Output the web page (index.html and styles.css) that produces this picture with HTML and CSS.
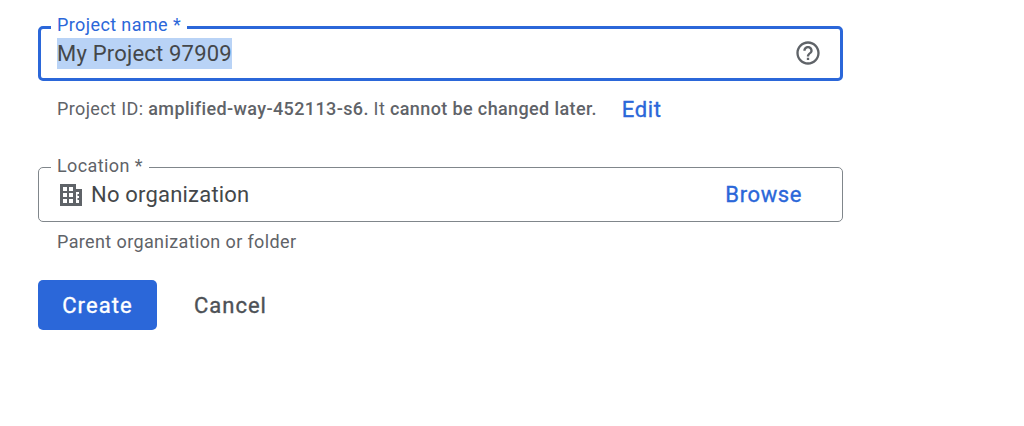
FILE: index.html
```html
<!DOCTYPE html>
<html lang="en">
<head>
    <meta charset="UTF-8">
    <title>New Project</title>
    <link rel="stylesheet" href="styles.css">
</head>
<body>
    <form class="project-form">
        <div class="field field-focused">
            <label class="field-label">Project name *</label>
            <div class="field-value"><span class="selected-text">My Project 97909</span></div>
            <svg class="help-icon" viewBox="0 0 24 24" width="28" height="28" fill="#5f6368">
                <path d="M11 18h2v-2h-2v2zm1-16C6.48 2 2 6.48 2 12s4.48 10 10 10 10-4.48 10-10S17.52 2 12 2zm0 18c-4.41 0-8-3.59-8-8s3.59-8 8-8 8 3.59 8 8-3.59 8-8 8zm0-14c-2.21 0-4 1.79-4 4h2c0-1.1.9-2 2-2s2 .9 2 2c0 2-3 1.75-3 5h2c0-2.25 3-2.5 3-5 0-2.21-1.79-4-4-4z"/>
            </svg>
        </div>
        <div class="hint-row">
            <p class="hint">Project ID: <b>amplified-way-452113-s6.</b> It <b>cannot be changed later.</b></p>
            <a class="link edit-link" href="#">Edit</a>
        </div>

        <div class="field field-location">
            <label class="field-label">Location *</label>
            <svg class="org-icon" viewBox="0 0 22 22" width="22" height="22">
                <path fill="#5f6368" fill-rule="evenodd" d="M0 0h16v5h6v17H0zM3 3v4h4V3zm6 0v4h4V3zM3 9v4h4V9zm6 0v4h4V9zM3 15v4h4v-4zm6 0v4h4v-4zm7-7v11h3v-3h-1.5v-2H19v-2h-1.5v-2H19V8z"/>
            </svg>
            <div class="field-value">No organization</div>
            <a class="link browse-link" href="#">Browse</a>
        </div>
        <p class="hint hint-location">Parent organization or folder</p>

        <div class="actions">
            <button type="button" class="create-button">Create</button>
            <button type="button" class="cancel-button">Cancel</button>
        </div>
    </form>
</body>
</html>
```

FILE: styles.css
```css
body {
    font-family: Roboto, Arial, sans-serif;
    background-color: #fff;
    color: #3c4043;
    margin: 0;
}
.project-form {
    width: 805px;
    margin-left: 38px;
    padding-top: 26px;
}
.field {
    position: relative;
    display: flex;
    align-items: center;
    box-sizing: border-box;
    height: 55px;
    padding: 0 21px 0 19px;
    border: 1px solid #80868b;
    border-radius: 5px;
}
.field-focused {
    border: 3px solid #2b67d9;
    padding: 0 18px 0 16px;
}
.field-location {
    margin-top: 44px;
    padding-left: 21px;
    padding-right: 40px;
}
.field-label {
    position: absolute;
    top: -12px;
    left: 12px;
    padding: 0 6px;
    background-color: #fff;
    color: #5f6368;
    font-size: 18px;
    letter-spacing: 0.4px;
    line-height: 20px;
}
.field-focused .field-label {
    top: -14px;
    left: 10px;
    color: #2b67d9;
}
.field-value {
    flex: 1;
    font-size: 22px;
    letter-spacing: 0.2px;
    line-height: 31px;
    color: #44474a;
}
.selected-text {
    display: inline-block;
    background-color: #b9d3f6;
}
.help-icon {
    flex: none;
    margin-bottom: 2px;
}
.org-icon {
    flex: none;
    margin-right: 9px;
}
.hint-row {
    display: flex;
    align-items: center;
    padding: 14px 0 0 19px;
}
.hint {
    margin: 0;
    font-size: 18px;
    letter-spacing: 0.38px;
    line-height: 28px;
    color: #5f6368;
}
.hint b {
    font-weight: 500;
}
.hint-location {
    padding: 6px 0 0 19px;
}
.link {
    color: #2b67d9;
    font-size: 22px;
    letter-spacing: 0.6px;
    -webkit-text-stroke: 0.35px;
    text-decoration: none;
}
.edit-link {
    margin-left: 25px;
}
.actions {
    display: flex;
    align-items: center;
    margin-top: 24px;
}
.create-button {
    width: 119px;
    height: 50px;
    background-color: #2b67d9;
    color: #fff;
    border: none;
    border-radius: 5px;
    font-family: inherit;
    font-size: 22px;
    letter-spacing: 1.1px;
    -webkit-text-stroke: 0.35px;
    cursor: pointer;
}
.cancel-button {
    margin-left: 37px;
    padding: 0;
    background: none;
    color: #4d5156;
    border: none;
    font-family: inherit;
    font-size: 22px;
    letter-spacing: 1px;
    -webkit-text-stroke: 0.35px;
    cursor: pointer;
}
```
